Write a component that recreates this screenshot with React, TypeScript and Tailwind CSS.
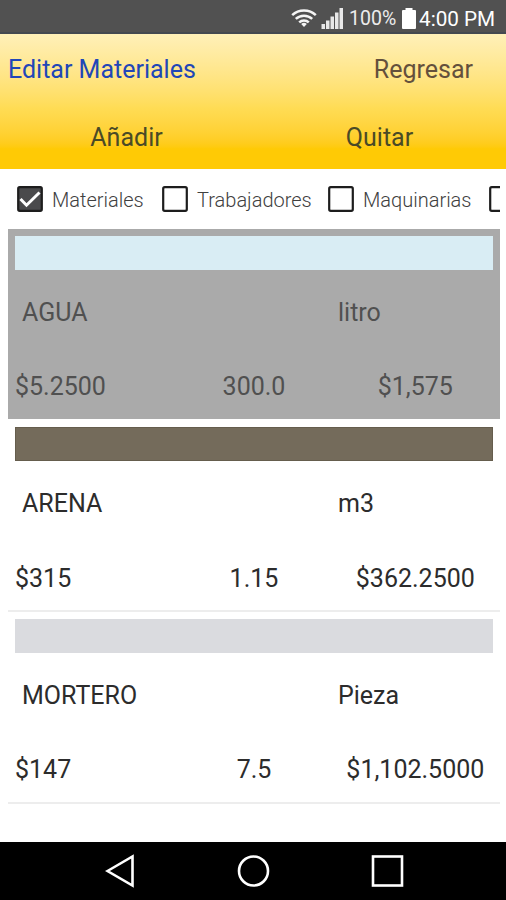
import clsx from "clsx";

interface Material {
  name: string;
  unit: string;
  price: string;
  quantity: string;
  total: string;
  swatch: string;
  selected?: boolean;
}

const materials: Material[] = [
  { name: "AGUA", unit: "litro", price: "$5.2500", quantity: "300.0", total: "$1,575", swatch: "bg-[#d9edf4]", selected: true },
  { name: "ARENA", unit: "m3", price: "$315", quantity: "1.15", total: "$362.2500", swatch: "bg-[#746b5b] border border-[#655d4d]" },
  { name: "MORTERO", unit: "Pieza", price: "$147", quantity: "7.5", total: "$1,102.5000", swatch: "bg-[#dadbdf]" },
];

const filters = [
  { label: "Materiales", checked: true, width: "w-[145px]" },
  { label: "Trabajadores", checked: false, width: "w-[166px]" },
  { label: "Maquinarias", checked: false, width: "w-[161px]" },
  { label: "", checked: false, width: "w-[40px]" },
];

function StatusBar() {
  return (
    <div className="flex h-[34px] shrink-0 items-center border-b-2 border-[#444950] bg-[#515151] pl-[291px] pt-1 text-white">
      <svg width="26" height="20" viewBox="0 0 26 20" fill="none" stroke="#f5f5f5" strokeWidth="2.5">
        <path d="M1.2 7.2a17 17 0 0 1 23.6 0" />
        <path d="M4.8 10.9a12 12 0 0 1 16.4 0" />
        <path d="M8.2 14.3a7 7 0 0 1 9.6 0" />
        <path d="M13 19l-2.8-2.9a4 4 0 0 1 5.6 0z" fill="#f5f5f5" stroke="none" />
      </svg>
      <svg className="ml-1" width="23" height="22" viewBox="0 0 23 22" fill="#e8e8e8">
        <rect x="0.5" y="17" width="3.5" height="5" />
        <rect x="5" y="13.5" width="3.5" height="8.5" />
        <rect x="9.5" y="9.5" width="3.5" height="12.5" />
        <rect x="14" y="5.5" width="3.5" height="16.5" />
        <rect x="18.5" y="1" width="3.5" height="21" />
      </svg>
      <span className="ml-[5px] w-[47px] whitespace-nowrap pt-0.5 text-[19.5px] leading-5 text-[#ececec]">100%</span>
      <svg className="ml-[6px]" width="14" height="21" viewBox="0 0 14 21" fill="#fff">
        <path d="M3.5 0h7v2H13a1 1 0 0 1 1 1v17a1 1 0 0 1-1 1H1a1 1 0 0 1-1-1V3a1 1 0 0 1 1-1h2.5z" />
      </svg>
      <span className="ml-[3px] whitespace-nowrap pt-0.5 text-[20.7px] leading-5">4:00 PM</span>
    </div>
  );
}

function Header() {
  return (
    <header className="h-[135px] shrink-0 bg-linear-to-b from-[#fff0b8] via-[#ffdc54] via-55% to-[#ffca05] to-85% text-[25px]">
      <div className="flex h-[70px] items-center justify-between pl-2 pr-[33px] pt-0.5">
        <span className="text-[#2146b8]">Editar Materiales</span>
        <span className="text-[#64503c]">Regresar</span>
      </div>
      <div className="grid h-[65px] grid-cols-2 items-center pt-0.5 text-center text-[#4a4a26]">
        <span>Añadir</span>
        <span>Quitar</span>
      </div>
    </header>
  );
}

function Checkbox({ checked }: { checked: boolean }) {
  return (
    <svg className="shrink-0" width="26" height="26" viewBox="0 0 26 26" fill="none">
      <rect x="1.2" y="1.2" width="23.6" height="23.6" rx="1.5" fill={checked ? "#4a4a4c" : "#fff"} stroke="#1d1d1d" strokeWidth="2.2" />
      {checked && <path d="M3.5 13l6 6.2L22.5 6.5" stroke="#fff" strokeWidth="3" />}
    </svg>
  );
}

function MaterialRow({ item }: { item: Material }) {
  return (
    <div
      className={clsx(
        "h-[191.5px] border-b-2 px-[7px] pt-[6.5px] text-[25px]",
        item.selected ? "border-white bg-[#aaaaaa] bg-clip-padding text-[#505050]" : "border-[#ededed] text-[#2c2c2c]"
      )}
    >
      <div className={clsx("h-[34px]", item.swatch)} />
      <div className="flex h-[85px] items-center pl-[7px] pt-px">
        <span className="w-[316px]">{item.name}</span>
        <span>{item.unit}</span>
      </div>
      <div className="grid h-[65px] grid-cols-3 items-center text-center">
        <span className="text-left">{item.price}</span>
        <span>{item.quantity}</span>
        <span className="pl-1">{item.total}</span>
      </div>
    </div>
  );
}

export default function App() {
  return (
    <div className="flex h-[900px] w-[506px] flex-col overflow-hidden bg-white font-['Roboto',sans-serif]">
      <StatusBar />
      <Header />
      <div className="mr-[6px] flex h-[60px] shrink-0 items-center overflow-hidden pl-[17px]">
        {filters.map((filter, i) => (
          <div key={i} className={clsx("flex shrink-0 items-center gap-[9px]", filter.width)}>
            <Checkbox checked={filter.checked} />
            <span className="pt-0.5 text-[20px] font-light text-[#404040]">{filter.label}</span>
          </div>
        ))}
      </div>
      <main className="ml-2 mr-[6px] grow">
        {materials.map((item) => (
          <MaterialRow key={item.name} item={item} />
        ))}
      </main>
      {/* Android navigation buttons */}
      <nav className="flex h-[58px] shrink-0 items-center bg-black pl-[105px]">
        <svg width="300" height="34" viewBox="0 0 300 34" fill="none" stroke="#fff" strokeWidth="2.6">
          <path d="M2.5 17L27.5 2.5v29z" />
          <circle cx="148.5" cy="17" r="14.5" />
          <rect x="268" y="2.5" width="29" height="29" />
        </svg>
      </nav>
    </div>
  );
}
